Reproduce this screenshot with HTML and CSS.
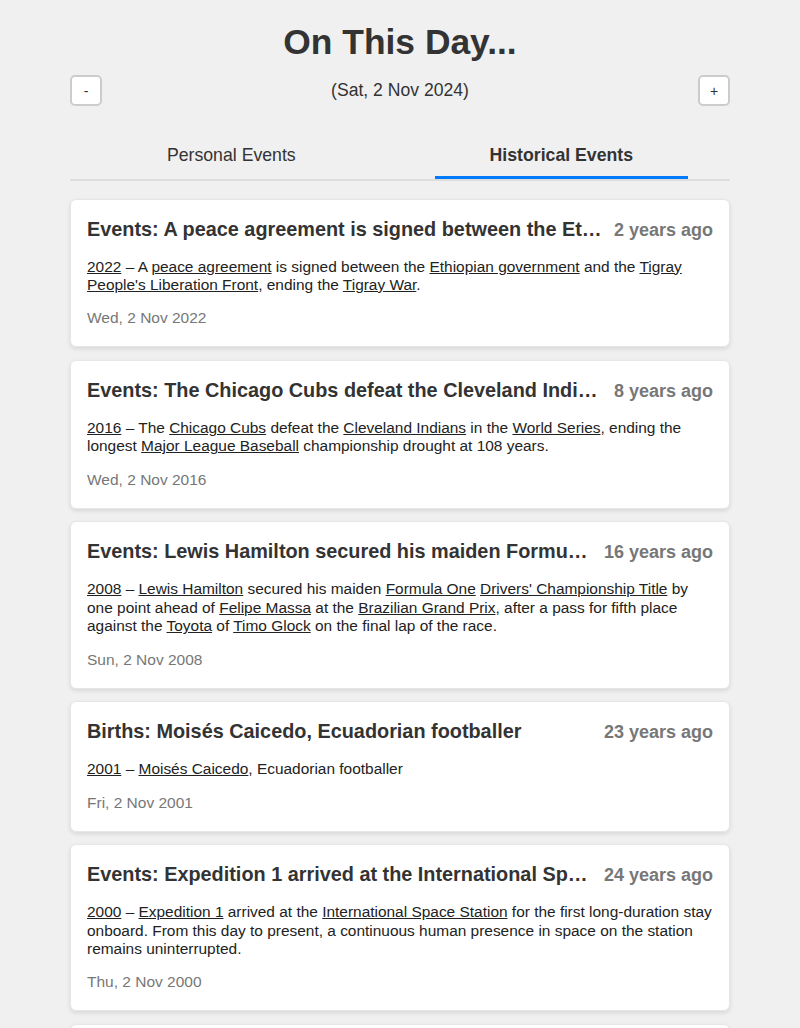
FILE: index.html
```html
<!DOCTYPE html>
<html lang="en">
<head>
<meta charset="utf-8">
<title>On This Day...</title>
<link rel="stylesheet" href="styles.css">
</head>
<body>
<div class="container">
  <h1 class="page-title">On This Day...</h1>
  <div class="date-nav">
    <button class="nav-btn">-</button>
    <span class="current-date">(Sat, 2 Nov 2024)</span>
    <button class="nav-btn">+</button>
  </div>
  <div class="tabs">
    <div class="tab">Personal Events</div>
    <div class="tab active">Historical Events</div>
  </div>
  <div class="cards">
    <div class="card">
      <div class="card-header">
        <h3 class="card-title">Events: A peace agreement is signed between the Ethiopian government and the Tigray People's Liberation Front, ending the Tigray War.</h3>
        <span class="ago">2 years ago</span>
      </div>
      <p class="card-text"><a href="#">2022</a> – A <a href="#">peace agreement</a> is signed between the <a href="#">Ethiopian government</a> and the <a href="#">Tigray People's Liberation Front</a>, ending the <a href="#">Tigray War</a>.</p>
      <p class="card-date">Wed, 2 Nov 2022</p>
    </div>
    <div class="card">
      <div class="card-header">
        <h3 class="card-title">Events: The Chicago Cubs defeat the Cleveland Indians in the World Series, ending the longest Major League Baseball championship drought at 108 years.</h3>
        <span class="ago">8 years ago</span>
      </div>
      <p class="card-text"><a href="#">2016</a> – The <a href="#">Chicago Cubs</a> defeat the <a href="#">Cleveland Indians</a> in the <a href="#">World Series</a>, ending the longest <a href="#">Major League Baseball</a> championship drought at 108 years.</p>
      <p class="card-date">Wed, 2 Nov 2016</p>
    </div>
    <div class="card">
      <div class="card-header">
        <h3 class="card-title">Events: Lewis Hamilton secured his maiden Formula One Drivers' Championship Title by one point ahead of Felipe Massa.</h3>
        <span class="ago">16 years ago</span>
      </div>
      <p class="card-text"><a href="#">2008</a> – <a href="#">Lewis Hamilton</a> secured his maiden <a href="#">Formula One</a> <a href="#">Drivers' Championship Title</a> by one point ahead of <a href="#">Felipe Massa</a> at the <a href="#">Brazilian Grand Prix</a>, after a pass for fifth place against the <a href="#">Toyota</a> of <a href="#">Timo Glock</a> on the final lap of the race.</p>
      <p class="card-date">Sun, 2 Nov 2008</p>
    </div>
    <div class="card">
      <div class="card-header">
        <h3 class="card-title">Births: Moisés Caicedo, Ecuadorian footballer</h3>
        <span class="ago">23 years ago</span>
      </div>
      <p class="card-text"><a href="#">2001</a> – <a href="#">Moisés Caicedo</a>, Ecuadorian footballer</p>
      <p class="card-date">Fri, 2 Nov 2001</p>
    </div>
    <div class="card">
      <div class="card-header">
        <h3 class="card-title">Events: Expedition 1 arrived at the International Space Station for the first long-duration stay onboard.</h3>
        <span class="ago">24 years ago</span>
      </div>
      <p class="card-text"><a href="#">2000</a> – <a href="#">Expedition 1</a> arrived at the <a href="#">International Space Station</a> for the first long-duration stay onboard. From this day to present, a continuous human presence in space on the station remains uninterrupted.</p>
      <p class="card-date">Thu, 2 Nov 2000</p>
    </div>
    <div class="card">
      <div class="card-header">
        <h3 class="card-title">Events: The Morris worm, the first Internet-distributed computer worm, is launched.</h3>
        <span class="ago">36 years ago</span>
      </div>
      <p class="card-text"><a href="#">1988</a> – The <a href="#">Morris worm</a>, the first Internet-distributed computer worm to gain significant mainstream media attention, is launched.</p>
      <p class="card-date">Wed, 2 Nov 1988</p>
    </div>
  </div>
</div>
</body>
</html>
```
FILE: styles.css
```css
* { box-sizing: border-box; }

body {
  margin: 0;
  background: #f0f0f0;
  font-family: "Liberation Sans", Arial, sans-serif;
  color: #333;
}

.container {
  width: 660px;
  margin: 0 auto;
}

.page-title {
  font-size: 35.4px;
  font-weight: bold;
  text-align: center;
  margin: 22px 0 12px;
  color: #333;
}

.date-nav {
  display: flex;
  justify-content: space-between;
  align-items: center;
}

.nav-btn {
  width: 32px;
  height: 31px;
  padding: 0;
  background: #fff;
  border: 2px solid #ccc;
  border-radius: 5px;
  font-family: "Liberation Sans", Arial, sans-serif;
  font-size: 14px;
  color: #333;
}

.current-date {
  font-size: 17.6px;
  color: #333;
}

.tabs {
  display: flex;
  justify-content: space-around;
  border-bottom: 2px solid #ddd;
  margin: 28.5px 0 18px;
}

.tab {
  padding: 10px 55px 10px;
  font-size: 17.7px;
  color: #333;
  border-bottom: 3px solid transparent;
}

.tab.active {
  font-weight: bold;
  border-bottom-color: #007bff;
}

.cards {
  display: flex;
  flex-direction: column;
  gap: 12.6px;
}

.card {
  background: #fff;
  border: 1px solid #e6e6e6;
  border-radius: 6px;
  box-shadow: 0 2px 4px rgba(0, 0, 0, 0.1);
  padding: 18px 15px 18.6px 16px;
}

.card-header {
  display: flex;
  align-items: baseline;
  gap: 11px;
  margin-bottom: 17px;
}

.card-title {
  flex: 1;
  min-width: 0;
  margin: 0;
  font-size: 19.85px;
  line-height: 23px;
  font-weight: bold;
  white-space: nowrap;
  overflow: hidden;
  text-overflow: ellipsis;
  color: #333;
}

.ago {
  font-size: 18px;
  font-weight: bold;
  color: #777;
  white-space: nowrap;
  margin-right: 1px;
}

.card-text {
  margin: 0 0 15px;
  font-size: 15.45px;
  line-height: 18.4px;
  color: #222;
}

.card-text a {
  color: #222;
  text-decoration: underline;
}

.card-date {
  margin: 0;
  font-size: 15.5px;
  line-height: 18.4px;
  color: #777;
}
```
